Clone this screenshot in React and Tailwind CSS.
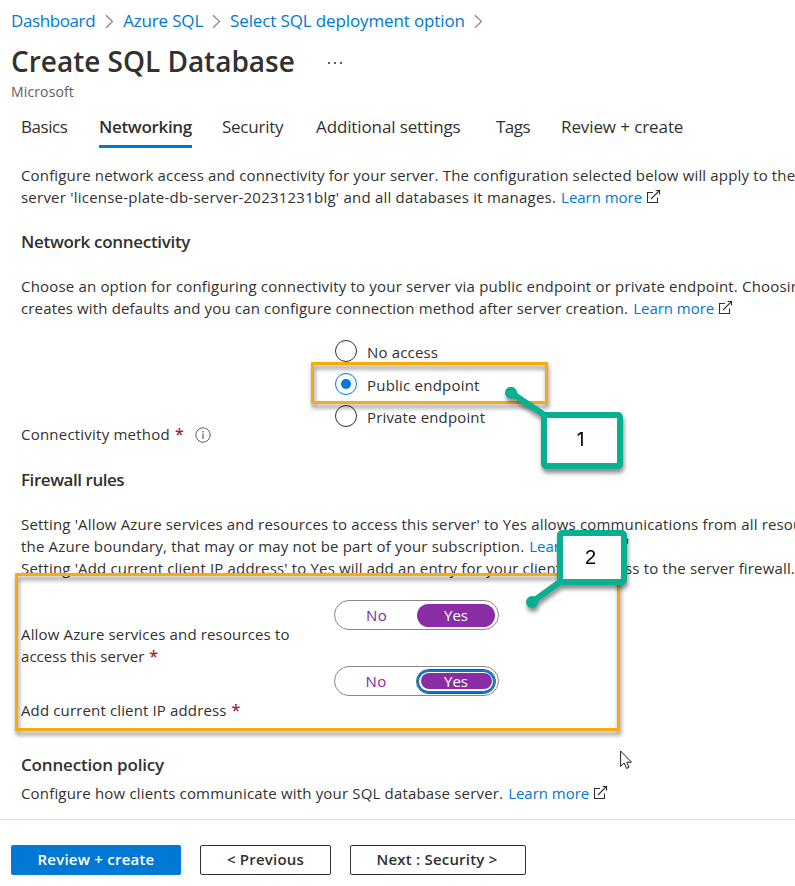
const ORANGE_SHADOW = "drop-shadow-[1px_4px_2px_rgba(0,0,0,0.45)]";

function Chevron({ className }) {
  return (
    <svg className={className} width="9" height="15" viewBox="0 0 9 15" fill="none" stroke="#8a8886" strokeWidth="1.2">
      <path d="M1 1.2 7.5 7.5 1 13.8" />
    </svg>
  );
}

function External({ className = "" }) {
  return (
    <svg className={`inline-block ${className}`} width="15" height="15" viewBox="0 0 15 15" fill="none" stroke="#323130" strokeWidth="1.1">
      <path d="M7 3.5H1.5V13.5H11.5V8.5" />
      <path d="M5 10 14 1M9.6 1.5H13.5V5.4" />
    </svg>
  );
}

function LearnMore() {
  return (
    <span className="ml-[5px]">
      <span className="tracking-[-0.03px] text-[#0078d4]">Learn more</span>
      <External className="relative ml-[4px] align-[-1px]" />
    </span>
  );
}

function Radio({ label, checked, tracking }) {
  return (
    <label className="flex h-[32.5px] items-center">
      <span
        className={`flex size-[22px] shrink-0 items-center justify-center rounded-full border bg-white ${
          checked ? "border-[#0078d4]" : "border-[#323130]"
        }`}
      >
        {checked && <span className="size-[10px] rounded-full bg-[#0078d4]" />}
      </span>
      <span className={`ml-[10px] pt-[1.5px] ${tracking}`}>{label}</span>
    </label>
  );
}

function Toggle({ focused }) {
  return (
    <div className="flex h-[30px] w-[165px] items-center rounded-full border border-[#8a8886] bg-white pr-[2px] text-[15px]">
      <span className="flex-1 pl-px text-center tracking-[0.3px] text-[#7f2a9c]">No</span>
      {focused ? (
        <span className="flex h-[25px] w-[80px] items-center rounded-full border border-[#4a4a4a] bg-white">
          <span className="flex h-[23px] w-full items-center rounded-full border-2 border-[#0078d4] bg-white p-[1.5px]">
            <span className="flex h-full w-full items-center justify-center rounded-full bg-[#8a2da5] pt-px leading-none text-white">
              Yes
            </span>
          </span>
        </span>
      ) : (
        <span className="mr-px flex h-[23px] w-[78px] items-center justify-center rounded-full bg-[#8a2da5] pt-px leading-none text-white">
          Yes
        </span>
      )}
    </div>
  );
}

function Star({ className = "" }) {
  return <span className={`ml-[5px] text-[16px] font-semibold leading-none text-[#a4262c] ${className}`}>*</span>;
}

function Header() {
  return (
    <header className="pl-[11px]">
      <nav className="flex h-[41px] items-center text-[17px] text-[#0078d4]">
        <span className="tracking-[-0.4px]">Dashboard</span>
        <Chevron className="ml-[10px] mt-[2px]" />
        <span className="ml-[9px] tracking-[-0.17px]">Azure SQL</span>
        <Chevron className="ml-[9px] mt-[2px]" />
        <span className="ml-[9px] tracking-[-0.13px]">Select SQL deployment option</span>
        <Chevron className="ml-[9px] mt-[2px]" />
      </nav>
      <div className="flex h-[40px] items-center">
        <h1 className="text-[28px] font-semibold leading-[40px] tracking-[-0.02px]">Create SQL Database</h1>
        <span className="ml-[33px] mt-[3px] flex gap-[4px]">
          <i className="size-[2px] bg-[#605e5c]" />
          <i className="size-[2px] bg-[#605e5c]" />
          <i className="size-[2px] bg-[#605e5c]" />
        </span>
      </div>
      <p className="h-[22px] text-[14px] leading-[22px] tracking-[0.13px] text-[#605e5c]">Microsoft</p>
    </header>
  );
}

function Tabs() {
  return (
    <div className="flex h-[45px] pl-[21px] text-[17px] leading-[47px]">
      <span className="w-[78px] tracking-[-0.45px]">Basics</span>
      <span className="w-[93px] whitespace-nowrap border-b-[3px] border-[#0078d4] font-semibold tracking-[-0.32px]">
        Networking
      </span>
      <span className="ml-[30px] w-[94px] tracking-[-0.25px]">Security</span>
      <span className="w-[180px] tracking-[-0.12px]">Additional settings</span>
      <span className="w-[65px] tracking-[-0.5px]">Tags</span>
      <span className="tracking-[-0.1px]">Review + create</span>
    </div>
  );
}

export default function App() {
  return (
    <div className="relative h-[886px] w-[795px] overflow-hidden bg-white font-['Open_Sans',sans-serif] text-[15px] leading-[22px] text-[#323130]">
      <Header />
      <Tabs />

      <main className="h-[671px] whitespace-nowrap pl-[21px] pt-[16px]">
        <p className="tracking-[0.155px]">
          Configure network access and connectivity for your server. The configuration selected below will apply to the
        </p>
        <p>
          <span className="tracking-[0.225px]">
            server 'license-plate-db-server-20231231blg' and all databases it manages.
          </span>
          <LearnMore />
        </p>

        <h2 className="mt-[22px] h-[24px] text-[17px] font-semibold leading-[24px] tracking-[-0.31px]">
          Network connectivity
        </h2>
        <p className="mt-[21px] tracking-[0.18px]">
          Choose an option for configuring connectivity to your server via public endpoint or private endpoint. Choosing
        </p>
        <p>
          <span className="tracking-[0.15px]">
            creates with defaults and you can configure connection method after server creation.
          </span>
          <LearnMore />
        </p>

        <div className="mt-[16px] flex h-[110px]">
          <div className="flex w-[314px] items-end">
            <span className="tracking-[0.22px]">Connectivity method</span>
            <Star className="mb-[3px]" />
            <svg className="mb-[2px] ml-[11px]" width="16" height="16" viewBox="0 0 16 16" fill="none" stroke="#605e5c">
              <circle cx="8" cy="8" r="7.2" />
              <path d="M8 6.6V12M8 4V5.4" strokeWidth="1.2" />
            </svg>
          </div>
          <div>
            <Radio label="No access" tracking="tracking-[0.16px]" />
            <Radio label="Public endpoint" checked tracking="tracking-[0.22px]" />
            <Radio label="Private endpoint" tracking="tracking-[0.15px]" />
          </div>
        </div>

        <h2 className="mt-[23px] h-[24px] text-[17px] font-semibold leading-[24px] tracking-[-0.45px]">Firewall rules</h2>
        <p className="mt-[21px] tracking-[0.16px]">
          Setting 'Allow Azure services and resources to access this server' to Yes allows communications from all resources
        </p>
        <p>
          <span className="tracking-[0.18px]">the Azure boundary, that may or may not be part of your subscription.</span>
          <LearnMore />
        </p>
        <p className="tracking-[0.16px]">
          Setting 'Add current client IP address' to Yes will add an entry for your client IP address to the server firewall.
        </p>

        <div className="mt-[21px] flex h-[121px]">
          <div className="w-[313px] pt-[23px]">
            <p className="tracking-[0.15px]">Allow Azure services and resources to</p>
            <p className="h-[22px]">
              <span className="tracking-[0.05px]">access this server</span>
              <Star className="ml-[4px]" />
            </p>
            <p className="mt-[32px] h-[22px]">
              <span className="tracking-[0.14px]">Add current client IP address</span>
              <Star className="ml-[4px]" />
            </p>
          </div>
          <div className="flex flex-col gap-[36px]">
            <Toggle />
            <Toggle focused />
          </div>
        </div>

        <h2 className="mt-[32px] h-[24px] text-[17px] font-semibold leading-[24px] tracking-[-0.18px]">
          Connection policy
        </h2>
        <p className="mt-[5px]">
          <span className="tracking-[0.17px]">Configure how clients communicate with your SQL database server.</span>
          <LearnMore />
        </p>
      </main>

      <footer className="flex h-[67px] gap-[19px] border-t border-[#dcdcdc] pl-[11px] pt-[25px] font-semibold">
        <button className="h-[30px] w-[170px] rounded-[2px] bg-[#0078d4] pb-[2px] tracking-[0.23px] text-white">
          Review + create
        </button>
        <button className="h-[30px] w-[131px] rounded-[2px] border border-[#323130] pb-[2px] tracking-[0.2px]">
          &lt; Previous
        </button>
        <button className="h-[30px] w-[176px] rounded-[2px] border border-[#323130] pb-[2px] pr-[2px] tracking-[0.2px]">
          Next : Security &gt;
        </button>
      </footer>

      {/* Annotation frames and callouts laid over the form */}
      <div className={`absolute left-[311px] top-[362px] h-[42px] w-[237px] border-[3px] border-[#f9ab0b] ${ORANGE_SHADOW}`} />
      <div className={`absolute left-[15px] top-[573px] h-[158px] w-[605px] border-[3px] border-[#f9ab0b] ${ORANGE_SHADOW}`} />

      <div className="absolute left-0 top-0 drop-shadow-[1px_4px_2px_rgba(0,0,0,0.45)]">
        <svg width="795" height="640" viewBox="0 0 795 640" fill="#07b090" stroke="#07b090">
          <circle cx="511" cy="392.7" r="6" stroke="none" />
          <path d="M511 392.7 549 418" strokeWidth="6" />
          <circle cx="532" cy="602" r="6" stroke="none" />
          <path d="M532 602 564 579" strokeWidth="6" />
        </svg>
        <div className="absolute left-[541px] top-[412px] flex h-[57px] w-[82px] items-center justify-center rounded-[5px] border-[6px] border-[#07b090] bg-white pb-px pr-[3px] font-['Inter',sans-serif] text-[19px] text-black">
          1
        </div>
        <div className="absolute left-[557px] top-[530px] flex h-[55px] w-[70px] items-center justify-center rounded-[5px] border-[6px] border-[#07b090] bg-white pb-[2px] pr-[3px] font-['Liberation_Sans',sans-serif] text-[20px] text-black">
          2
        </div>
      </div>

      <svg className="absolute left-[620px] top-[750px]" width="13" height="20" viewBox="0 0 13 20" fill="#fff" stroke="#1b1b2b" strokeLinejoin="miter">
        <path d="M.6 1V16.4L4.2 13 6.6 18.4 9 17.4 6.7 12.2H11.5Z" />
      </svg>
    </div>
  );
}
